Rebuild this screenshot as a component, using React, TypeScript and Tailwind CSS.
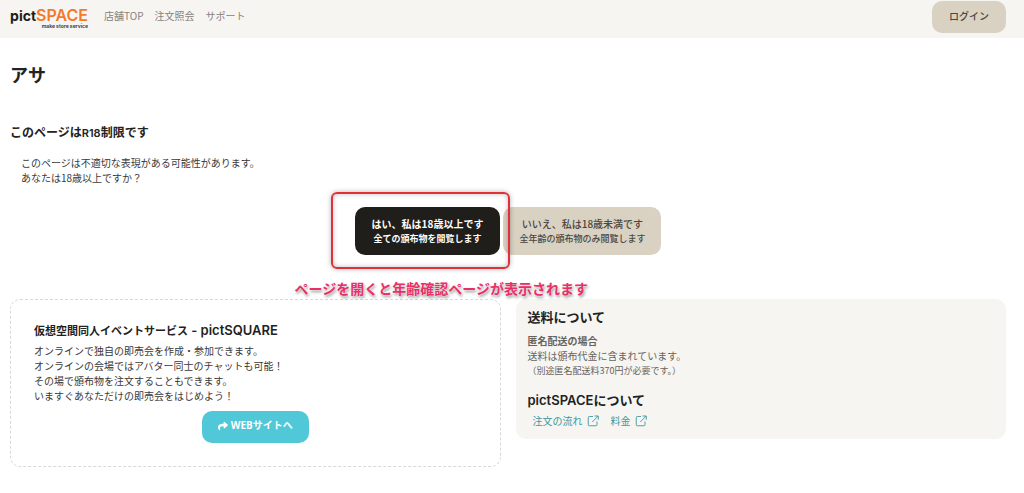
import React from "react";
import { FaShare } from "react-icons/fa";

function ExternalIcon() {
  return (
    <svg className="size-3" viewBox="0 0 24 24" fill="none" stroke="currentColor" strokeWidth="1.8" aria-hidden="true">
      <path d="M12 3H4.500A2 2 0 0 0 2.500 5V19.500A2 2 0 0 0 4.500 21.500H18A2 2 0 0 0 20 19.500V13" />
      <path d="M15 2h7.500v7.500M22.500 2 10.500 14" />
    </svg>
  );
}

function Logo() {
  return (
    <a href="#top" className="flex w-[78px] flex-col items-end" aria-label="pictSPACE">
      <span className="font-['Inter','Liberation_Sans',sans-serif] text-sm leading-[15px] font-bold whitespace-nowrap text-[#1f1d1a]">
        pict<span className="text-base leading-[15px] font-semibold text-[#f37a2b]">SPACE</span>
      </span>
      <span className="font-['Inter','Liberation_Sans',sans-serif] text-[5px] leading-[6px] font-bold whitespace-nowrap text-[#444]">
        make store service
      </span>
    </a>
  );
}

const nav = ["店舗TOP", "注文照会", "サポート"];
const links = ["注文の流れ", "料金"];

export default function App() {
  return (
    <div className="min-h-screen bg-white font-['Noto_Sans_CJK_JP',sans-serif] text-[10px] leading-[15px] text-[#3a3937]">
      <header className="flex h-[38px] items-start justify-between bg-[#f7f5f2] pr-[18px] pl-[10px]">
        <div className="flex items-start gap-4 pt-2">
          <Logo />
          <nav className="flex gap-[11px] text-[#85827e]">
            {nav.map((n) => (
              <a key={n} href="#nav">{n}</a>
            ))}
          </nav>
        </div>
        <button className="mt-px h-8 rounded-[10px] bg-[#d9d1c1] px-[17px] pb-[3px] font-medium text-[#4b463e]">ログイン</button>
      </header>

      <main className="pr-[18px] pl-[10px]">
        <h1 className="pt-6 text-lg leading-6 font-bold text-[#222]">アサ</h1>
        <h2 className="pt-9 text-xs leading-5 font-bold text-[#222]">このページは<span className="font-['Inter',sans-serif] text-[11px] font-semibold">R18</span>制限です</h2>
        <p className="px-[11px] pt-3">
          このページは不適切な表現がある可能性があります。
          <br />
          あなたは18歳以上ですか？
        </p>

        <div className="mt-[22px] flex justify-center gap-[3px]">
          <div className="relative">
            <button className="h-12 rounded-[10px] bg-[#201e1a] px-[17px] font-bold text-white">
              はい、私は18歳以上です
              <span className="block text-[9px]">全ての頒布物を閲覧します</span>
            </button>
            <div className="pointer-events-none absolute -top-[15px] -right-[10px] -bottom-[14px] -left-6 z-10 rounded-md border-2 border-[#e0313a] shadow-[0_0_5px_rgba(0,0,0,0.3),inset_0_0_5px_rgba(0,0,0,0.25)]" />
            <p className="absolute top-[73px] -left-[60px] z-10 text-sm leading-4 font-bold whitespace-nowrap text-[#ea2f68] [text-shadow:0_0_2px_#fff,1px_2px_3px_rgba(0,0,0,0.45)]">
              ページを開くと年齢確認ページが表示されます
            </p>
          </div>
          <button className="h-12 rounded-[10px] bg-[#d9d1c1] px-4 font-medium text-[#4b463e]">
            いいえ、私は18歳未満です
            <span className="block text-[9px]">全年齢の頒布物のみ閲覧します</span>
          </button>
        </div>

        <div className="mt-11 grid grid-cols-2 items-start gap-[15px] pb-6">
          <section className="flex flex-col rounded-[10px] border border-dashed border-[#d8d8d8] px-[23px] pt-5 pb-[23px]">
            <h3 className="text-[11px] leading-5 font-bold text-[#222]">
              仮想空間同人イベントサービス<span className="font-['Inter',sans-serif] text-[13px] font-semibold"> - pictSQUARE</span>
            </h3>
            <p className="pt-[3px]">
              オンラインで独自の即売会を作成・参加できます。
              <br />
              オンラインの会場ではアバター同士のチャットも可能！
              <br />
              その場で頒布物を注文することもできます。
              <br />
              いますぐあなただけの即売会をはじめよう！
            </p>
            <a href="#site" className="mt-2 flex h-8 items-center gap-[3px] self-center rounded-[10px] bg-[#50c8d8] px-4 pb-[3px] font-['Noto_Sans','Noto_Sans_CJK_JP',sans-serif] font-bold text-white">
              <FaShare className="size-[10px]" />
              WEBサイトへ
            </a>
          </section>

          <section className="rounded-[10px] bg-[#f6f5f1] px-3 pt-2 pb-[11px] text-[#66635e]">
            <h3 className="text-[13px] leading-5 font-bold text-[#222]">送料について</h3>
            <h4 className="pt-[6px] font-bold">匿名配送の場合</h4>
            <p>送料は頒布代金に含まれています。</p>
            <p className="text-[9px]">（別途匿名配送料370円が必要です。）</p>
            <h3 className="pt-3 text-[13px] leading-5 font-bold text-[#222]">
              <span className="font-['Inter',sans-serif] font-semibold">pictSPACE</span>について
            </h3>
            <div className="flex gap-3 px-[5px] pt-[3px] text-[#3d98a3]">
              {links.map((l) => (
                <a key={l} href="#link" className="flex items-center gap-1">
                  {l}
                  <ExternalIcon />
                </a>
              ))}
            </div>
          </section>
        </div>
      </main>
    </div>
  );
}
